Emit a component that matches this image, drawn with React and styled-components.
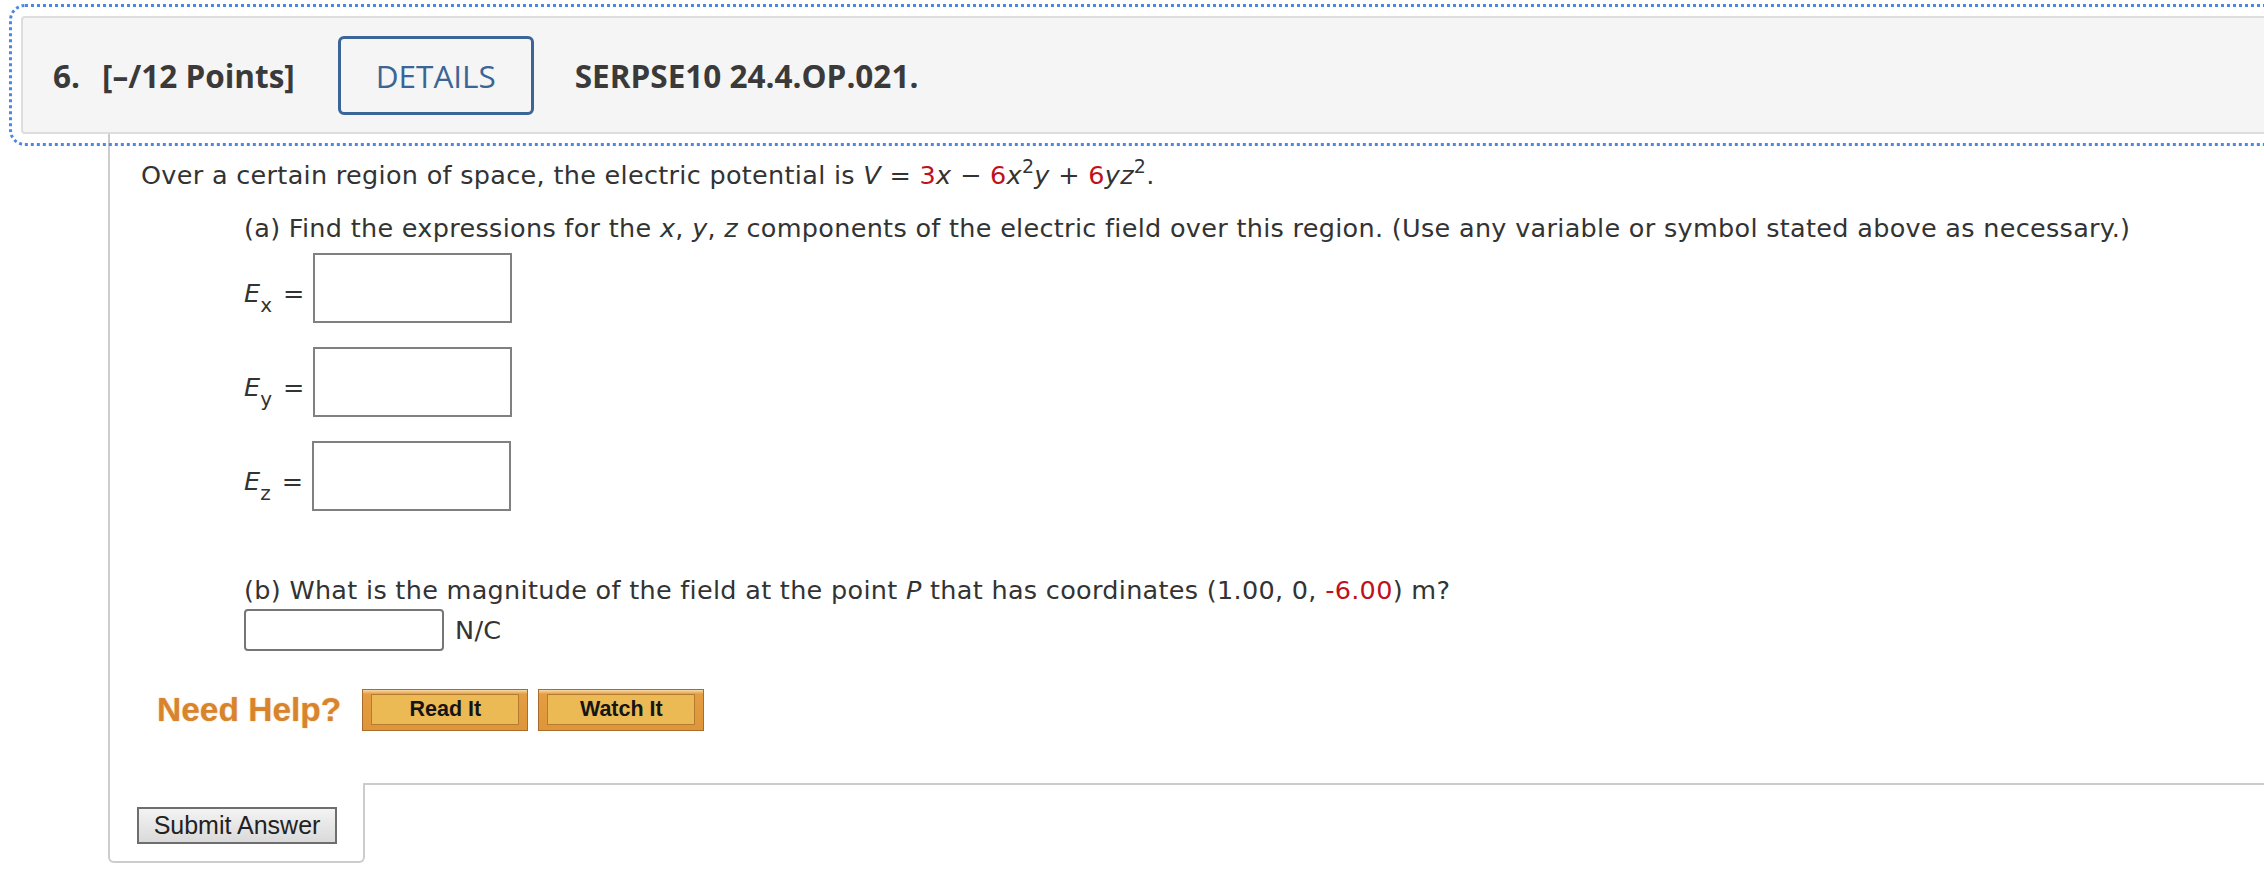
import styled, { createGlobalStyle } from "styled-components";

const GlobalStyle = createGlobalStyle`
  html, body {
    margin: 0;
    padding: 0;
    background: #fff;
  }
`;

const Page = styled.div`
  width: 2264px;
  height: 886px;
  overflow: hidden;
  box-sizing: border-box;
  padding-top: 16px;
  font-family: "DejaVu Sans", Verdana, sans-serif;
  font-size: 25.5px;
  letter-spacing: 0.3px;
  color: #333;
`;

const Header = styled.div`
  margin-left: 21px;
  width: 2400px;
  height: 118px;
  box-sizing: border-box;
  display: flex;
  align-items: center;
  padding-left: 30px;
  background: #f5f5f5;
  border: 2px solid #ddd;
  border-radius: 4px;
  outline: 3px dotted #4a88e4;
  outline-offset: 9px;
  font-family: "Open Sans", sans-serif;
  font-size: 31.5px;
  font-weight: 700;
  letter-spacing: 0;
  color: #3a3a3a;
`;

const Points = styled.span`
  margin-left: 22px;
`;

const DetailsButton = styled.span`
  margin-left: 43px;
  width: 196px;
  height: 79px;
  box-sizing: border-box;
  display: flex;
  align-items: center;
  justify-content: center;
  border: 3px solid #3b6596;
  border-radius: 6px;
  color: #3b6596;
  font-weight: 500;
`;

const Code = styled.span`
  margin-left: 41px;
`;

const Body = styled.div`
  margin-left: 108px;
  border-left: 2px solid #ccc;
  padding: 26px 0 52px 31px;
`;

const Line = styled.div`
  line-height: 30px;
  white-space: nowrap;
  margin-left: ${(p) => p.$indent || 0}px;
  margin-top: ${(p) => p.$top || 0}px;
`;

const I = styled.i`
  font-style: italic;
`;

const Red = styled.span`
  color: #c0101c;
`;

const Sup = styled.span`
  font-size: 19px;
  line-height: 0;
  vertical-align: 11px;
`;

const Sub = styled.span`
  font-size: 20px;
  line-height: 0;
  vertical-align: -10px;
`;

const Fields = styled.div`
  margin: 10px 0 0 103px;
  display: flex;
  flex-direction: column;
  gap: 24px;
`;

const FieldRow = styled.div`
  display: flex;
  align-items: center;
`;

const FieldLabel = styled.span`
  line-height: 30px;
  margin-top: 10px;
  letter-spacing: 0;
`;

const Eq = styled.span`
  margin: 0 9px 0 11px;
`;

const AnswerBox = styled.div`
  width: 199px;
  height: 70px;
  box-sizing: border-box;
  border: 2px solid #808080;
  background: #fff;
`;

const MagnitudeRow = styled.div`
  margin: 4px 0 0 103px;
  display: flex;
  align-items: center;
`;

const SmallInput = styled.div`
  width: 200px;
  height: 42px;
  box-sizing: border-box;
  border: 2px solid #767676;
  border-radius: 4px;
  background: #fff;
`;

const Unit = styled.span`
  margin-left: 11px;
  line-height: 30px;
`;

const HelpRow = styled.div`
  margin: 38px 0 0 16px;
  display: flex;
  align-items: center;
  gap: 10px;
  letter-spacing: 0;
`;

const NeedHelp = styled.span`
  font-family: "Liberation Sans", Arial, sans-serif;
  font-weight: 700;
  font-size: 33.5px;
  color: #d8842c;
  text-shadow: 0 0 2px rgba(216, 132, 44, 0.45);
  margin-right: 11px;
`;

const HelpButton = styled.div`
  width: 166px;
  height: 42px;
  box-sizing: border-box;
  padding: 4px 8px 5px;
  border: 1px solid #a86d2c;
  background: linear-gradient(#f7dcab 0, #e49d42 4px, #df963a 100%);
`;

const HelpInner = styled.div`
  height: 100%;
  box-sizing: border-box;
  display: flex;
  align-items: center;
  justify-content: center;
  border: 1px solid #b57b31;
  background: #ecba55;
  font-family: "Liberation Sans", Arial, sans-serif;
  font-weight: 700;
  font-size: 21.5px;
  color: #151515;
`;

const Footer = styled.div`
  margin-left: 108px;
  display: flex;
`;

const Tab = styled.div`
  width: 257px;
  box-sizing: border-box;
  border: 2px solid #ccc;
  border-top: none;
  border-radius: 0 0 6px 6px;
  padding: 24px 0 17px 27px;
`;

const TabRest = styled.div`
  flex: 1;
  border-top: 2px solid #ccc;
`;

const SubmitButton = styled.div`
  width: 200px;
  height: 37px;
  box-sizing: border-box;
  display: flex;
  align-items: center;
  justify-content: center;
  border: 2px solid #6e6e6e;
  background: linear-gradient(#f3f3f3, #dadada);
  font-family: "Liberation Sans", Arial, sans-serif;
  font-size: 25px;
  letter-spacing: 0;
  color: #222;
`;

const components = ["x", "y", "z"];

export default function App() {
  return (
    <>
      <GlobalStyle />
      <Page>
        <Header>
          <span>6.</span>
          <Points>[–/12 Points]</Points>
          <DetailsButton>DETAILS</DetailsButton>
          <Code>SERPSE10 24.4.OP.021.</Code>
        </Header>

        <Body>
          <Line>
            Over a certain region of space, the electric potential is <I>V</I> ={" "}
            <Red>3</Red>
            <I>x</I> − <Red>6</Red>
            <I>x</I>
            <Sup>2</Sup>
            <I>y</I> + <Red>6</Red>
            <I>yz</I>
            <Sup>2</Sup>.
          </Line>

          <Line $indent={103} $top={23}>
            (a) Find the expressions for the <I>x</I>, <I>y</I>, <I>z</I> components of the
            electric field over this region. (Use any variable or symbol stated above as
            necessary.)
          </Line>

          <Fields>
            {components.map((c) => (
              <FieldRow key={c}>
                <FieldLabel>
                  <I>E</I>
                  <Sub>{c}</Sub>
                  <Eq>=</Eq>
                </FieldLabel>
                <AnswerBox />
              </FieldRow>
            ))}
          </Fields>

          <Line $indent={103} $top={64}>
            (b) What is the magnitude of the field at the point <I>P</I> that has coordinates
            (1.00, 0, <Red>-6.00</Red>) m?
          </Line>

          <MagnitudeRow>
            <SmallInput />
            <Unit>N/C</Unit>
          </MagnitudeRow>

          <HelpRow>
            <NeedHelp>Need Help?</NeedHelp>
            <HelpButton>
              <HelpInner>Read It</HelpInner>
            </HelpButton>
            <HelpButton>
              <HelpInner>Watch It</HelpInner>
            </HelpButton>
          </HelpRow>
        </Body>

        <Footer>
          <Tab>
            <SubmitButton>Submit Answer</SubmitButton>
          </Tab>
          <TabRest />
        </Footer>
      </Page>
    </>
  );
}
